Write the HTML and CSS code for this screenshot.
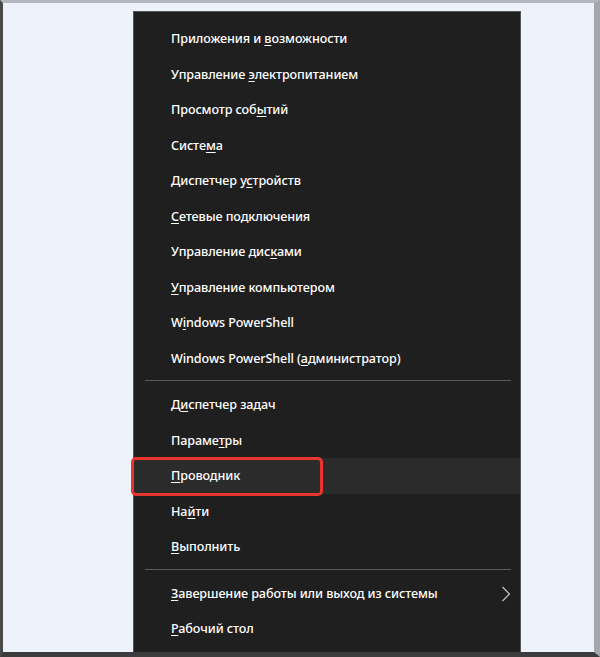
FILE: index.html
```html
<!DOCTYPE html>
<html lang="ru">
<head>
<meta charset="utf-8">
<link rel="stylesheet" href="styles.css">
</head>
<body>
<div class="frame">
  <div class="menu">
    <ul class="group">
      <li class="item">Приложения и <u>в</u>озможности</li>
      <li class="item">Управление <u>э</u>лектропитанием</li>
      <li class="item">Просмотр соб<u>ы</u>тий</li>
      <li class="item">Систе<u>м</u>а</li>
      <li class="item">Диспетчер у<u>с</u>тройств</li>
      <li class="item"><u>С</u>етевые подключения</li>
      <li class="item">Управление дис<u>к</u>ами</li>
      <li class="item"><u>У</u>правление компьютером</li>
      <li class="item">W<u>i</u>ndows PowerShell</li>
      <li class="item">Windows PowerShell (<u>а</u>дминистратор)</li>
    </ul>
    <div class="sep"></div>
    <ul class="group">
      <li class="item">Д<u>и</u>спетчер задач</li>
      <li class="item">Параме<u>т</u>ры</li>
      <li class="item active"><u>П</u>роводник<span class="mark"></span></li>
      <li class="item">На<u>й</u>ти</li>
      <li class="item"><u>В</u>ыполнить</li>
    </ul>
    <div class="sep"></div>
    <ul class="group">
      <li class="item sub"><u>З</u>авершение работы или выход из системы
        <svg class="chev" width="10" height="16" viewBox="0 0 10 16"><path d="M1.5 1 L8.5 8 L1.5 15" fill="none" stroke="#c8c8c8" stroke-width="1.2"/></svg>
      </li>
      <li class="item"><u>Р</u>абочий стол</li>
    </ul>
  </div>
</div>
</body>
</html>
```
FILE: styles.css
```css
* { box-sizing: border-box; }
html, body { margin: 0; padding: 0; }
body { width: 600px; height: 657px; overflow: hidden; background: #eef3fb; }
.frame {
  width: 600px;
  height: 657px;
  background: #eef3fb;
  border-top: 3px solid #b4b8be;
  border-left: 3px solid #4a4a4a;
  border-right: 6px solid #a4a7ab;
  border-bottom: 5px solid #3c3c3c;
  overflow: hidden;
}
.menu {
  margin-left: 130px;
  margin-top: 8px;
  width: 388px;
  height: 650px;
  background: #1f1f1f;
  border: 1px solid #555;
  border-bottom: none;
  padding-top: 9px;
  font-family: "Noto Sans", "Open Sans", sans-serif;
  font-size: 12.6px;
  font-weight: 500;
  letter-spacing: -0.1px;
  color: #ffffff;
}
.group { list-style: none; margin: 0; padding: 0; }
.item {
  position: relative;
  height: 35.5px;
  line-height: 35.5px;
  padding-left: 37px;
  white-space: nowrap;
}
.item u { text-decoration-thickness: 1px; text-underline-offset: 2px; }
.active { background: #2b2b2b; }
.mark {
  position: absolute;
  left: -3px;
  top: -1px;
  width: 192px;
  height: 39px;
  border: 3px solid #e8352d;
  border-radius: 5px;
}
.sep {
  height: 1px;
  background: #5c5c5c;
  margin: 4px 9px 6px 11px;
}
.chev { position: absolute; right: 9px; top: 10px; }
```
